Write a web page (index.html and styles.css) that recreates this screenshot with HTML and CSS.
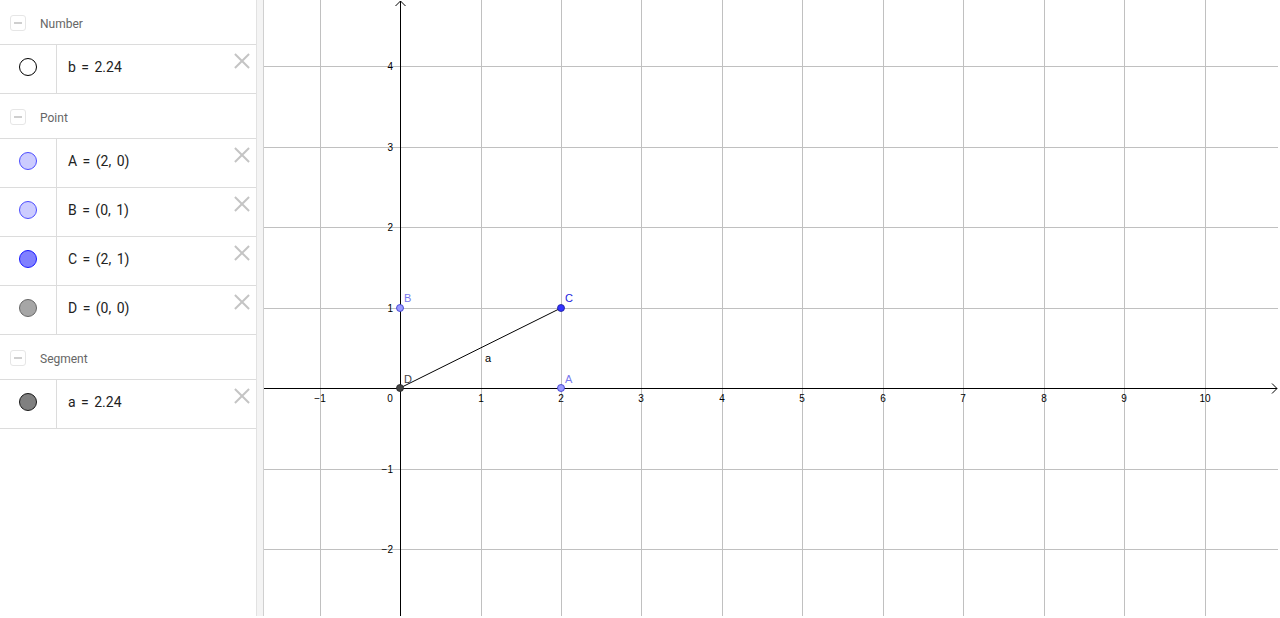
FILE: index.html
```html
<!DOCTYPE html>
<html>
<head>
<meta charset="utf-8">
<link rel="stylesheet" href="styles.css">
</head>
<body>
<div class="app">
  <div class="algebra">
    <div class="group">
      <span class="toggle"></span><span class="group-name">Number</span>
    </div>
    <div class="item">
      <div class="marker"><span class="dot dot-b"></span></div>
      <div class="formula">b = 2.24</div>
      <span class="close"></span>
    </div>
    <div class="group">
      <span class="toggle"></span><span class="group-name">Point</span>
    </div>
    <div class="item">
      <div class="marker"><span class="dot dot-light"></span></div>
      <div class="formula">A = (2, 0)</div>
      <span class="close"></span>
    </div>
    <div class="item">
      <div class="marker"><span class="dot dot-light"></span></div>
      <div class="formula">B = (0, 1)</div>
      <span class="close"></span>
    </div>
    <div class="item">
      <div class="marker"><span class="dot dot-blue"></span></div>
      <div class="formula">C = (2, 1)</div>
      <span class="close"></span>
    </div>
    <div class="item">
      <div class="marker"><span class="dot dot-gray"></span></div>
      <div class="formula">D = (0, 0)</div>
      <span class="close"></span>
    </div>
    <div class="group">
      <span class="toggle"></span><span class="group-name">Segment</span>
    </div>
    <div class="item">
      <div class="marker"><span class="dot dot-dark"></span></div>
      <div class="formula">a = 2.24</div>
      <span class="close"></span>
    </div>
  </div>
  <div class="splitter"></div>
  <div class="graphics">
    <svg class="plot" width="1014" height="616" viewBox="0 0 1014 616" xmlns="http://www.w3.org/2000/svg">
      <g stroke="#c0c0c0" stroke-width="1" shape-rendering="crispEdges">
        <line x1="56" y1="0" x2="56" y2="616"/>
        <line x1="217" y1="0" x2="217" y2="616"/>
        <line x1="297" y1="0" x2="297" y2="616"/>
        <line x1="377" y1="0" x2="377" y2="616"/>
        <line x1="458" y1="0" x2="458" y2="616"/>
        <line x1="538" y1="0" x2="538" y2="616"/>
        <line x1="619" y1="0" x2="619" y2="616"/>
        <line x1="699" y1="0" x2="699" y2="616"/>
        <line x1="780" y1="0" x2="780" y2="616"/>
        <line x1="860" y1="0" x2="860" y2="616"/>
        <line x1="941" y1="0" x2="941" y2="616"/>
        <line x1="0" y1="66" x2="1014" y2="66"/>
        <line x1="0" y1="147" x2="1014" y2="147"/>
        <line x1="0" y1="227" x2="1014" y2="227"/>
        <line x1="0" y1="308" x2="1014" y2="308"/>
        <line x1="0" y1="469" x2="1014" y2="469"/>
        <line x1="0" y1="549" x2="1014" y2="549"/>
      </g>
      <g stroke="#000" stroke-width="1" fill="none" shape-rendering="crispEdges">
        <line x1="0" y1="388" x2="1013" y2="388"/>
        <line x1="136" y1="1" x2="136" y2="616"/>
      </g>
      <g stroke="#000" stroke-width="1" fill="none">
        <polyline points="1008,383.5 1013,388.5 1008,393.5"/>
        <polyline points="131.5,6 136.5,1 141.5,6"/>
      </g>
      <g font-family="Liberation Sans, Arial, sans-serif" font-size="10" fill="#000" text-anchor="middle">
        <text x="56" y="402">−1</text>
        <text x="126" y="402">0</text>
        <text x="217" y="402">1</text>
        <text x="297" y="402">2</text>
        <text x="377" y="402">3</text>
        <text x="458" y="402">4</text>
        <text x="538" y="402">5</text>
        <text x="619" y="402">6</text>
        <text x="699" y="402">7</text>
        <text x="780" y="402">8</text>
        <text x="860" y="402">9</text>
        <text x="941" y="402">10</text>
      </g>
      <g font-family="Liberation Sans, Arial, sans-serif" font-size="10" fill="#000" text-anchor="end">
        <text x="129" y="70">4</text>
        <text x="129" y="151">3</text>
        <text x="129" y="231">2</text>
        <text x="129" y="312">1</text>
        <text x="129" y="473">−1</text>
        <text x="129" y="553">−2</text>
      </g>
      <line x1="136" y1="388" x2="297" y2="308" stroke="#000" stroke-width="1"/>
      <circle cx="297" cy="388" r="3.5" fill="#9999ff" stroke="#3333cc" stroke-width="0.8"/>
      <circle cx="136" cy="308" r="3.5" fill="#9999ff" stroke="#3333cc" stroke-width="0.8"/>
      <circle cx="297" cy="308" r="3.5" fill="#3333ff" stroke="#1a1a99" stroke-width="0.8"/>
      <circle cx="136" cy="388" r="3.5" fill="#444" stroke="#222" stroke-width="0.8"/>
      <g font-family="Liberation Sans, Arial, sans-serif" font-size="11">
        <text x="140" y="302" fill="#7777ee">B</text>
        <text x="301" y="302" fill="#2222dd">C</text>
        <text x="301" y="383" fill="#7777ee">A</text>
        <text x="140" y="383" fill="#444">D</text>
        <text x="221" y="362" fill="#000">a</text>
      </g>
    </svg>
  </div>
</div>
</body>
</html>
```
FILE: styles.css
```css
html, body {
  margin: 0;
  padding: 0;
  background: #fff;
}
.app {
  display: flex;
  height: 616px;
  width: 1278px;
}
.algebra {
  width: 256px;
  flex: none;
  background: #fff;
  font-family: Roboto, "Noto Sans", sans-serif;
}
.group {
  display: flex;
  align-items: center;
  border-bottom: 1px solid #dcdcdc;
  padding-top: 2px;
  box-sizing: border-box;
  height: 45px;
}
.toggle {
  width: 14px;
  height: 14px;
  margin-left: 10px;
  border: 1px solid #e6e6e6;
  border-radius: 3px;
  position: relative;
  flex: none;
}
.toggle::after {
  content: "";
  position: absolute;
  left: 3px;
  right: 3px;
  top: 6px;
  height: 2px;
  background: #cfcfcf;
}
.group-name {
  margin-left: 14px;
  margin-top: 2px;
  font-size: 12px;
  color: #666;
}
.item {
  height: 48px;
  display: flex;
  border-bottom: 1px solid #dcdcdc;
  position: relative;
}
.marker {
  width: 57px;
  flex: none;
  border-right: 1px solid #dcdcdc;
  display: flex;
  align-items: center;
  justify-content: center;
  box-sizing: border-box;
  padding-bottom: 4px;
}
.dot {
  width: 18px;
  height: 18px;
  border-radius: 50%;
  box-sizing: border-box;
  border: 1px solid #000;
}
.dot-b { background: #fff; border-color: #000; }
.dot-light { background: #ccccff; border-color: #4d4dff; }
.dot-blue { background: #8080ff; border-color: #1a1aff; }
.dot-gray { background: #a6a6a6; border-color: #666; }
.dot-dark { background: #808080; border-color: #1a1a1a; }
.formula {
  display: flex;
  align-items: center;
  padding-left: 11px;
  padding-bottom: 4px;
  font-size: 14px;
  color: #222;
  word-spacing: 2px;
}
.close {
  position: absolute;
  right: 6px;
  top: 8px;
  width: 16px;
  height: 16px;
}
.close::before,
.close::after {
  content: "";
  position: absolute;
  left: -2px;
  top: 7px;
  width: 20px;
  height: 2px;
  background: #c4c4c4;
  transform: rotate(45deg);
}
.close::after {
  transform: rotate(-45deg);
}
.splitter {
  width: 6px;
  flex: none;
  background: #f4f4f4;
  border-left: 1px solid #e2e2e2;
  border-right: 1px solid #d0d0d0;
}
.graphics {
  flex: none;
  width: 1014px;
  height: 616px;
  overflow: hidden;
}
.plot {
  display: block;
}
```
